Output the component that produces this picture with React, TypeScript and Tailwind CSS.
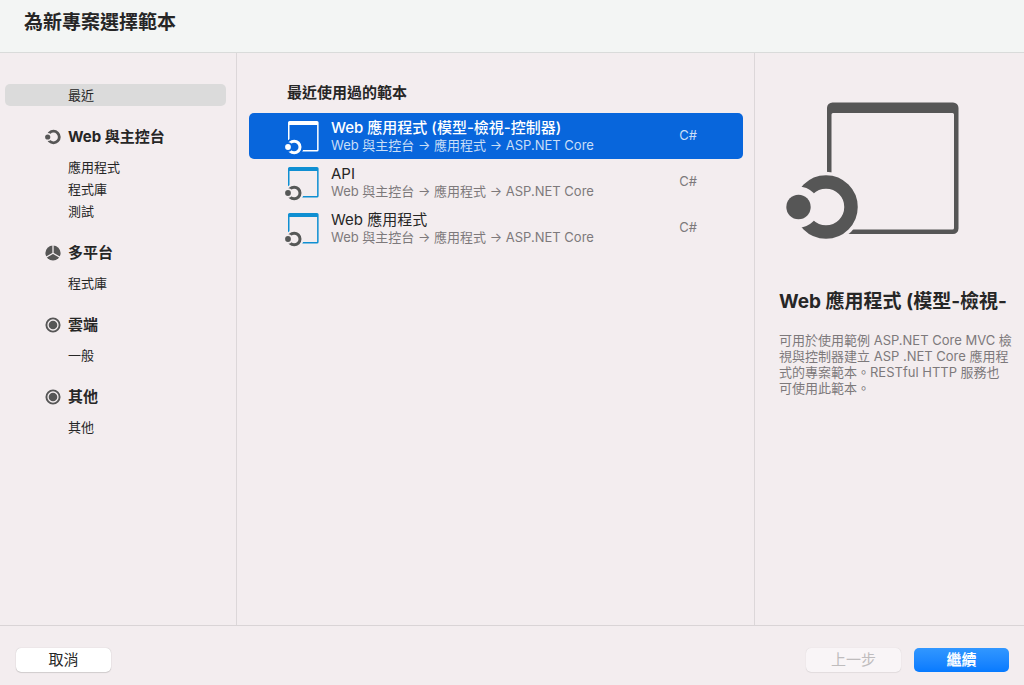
import { useState } from "react";

type IconProps = { className?: string };

function TemplateIcon({ selected, id }: { selected: boolean; id: string }) {
  const frame = selected ? "#ffffff" : "#0f8fd2";
  const ring = selected ? "#ffffff" : "#565857";
  return (
    <svg viewBox="0 0 34 34" className="mb-1 h-[34px] w-[34px] shrink-0 self-end" aria-hidden="true">
      <defs>
        <mask id={`frame-${id}`} maskUnits="userSpaceOnUse" x="0" y="0" width="34" height="34">
          <rect width="34" height="34" fill="#fff" />
          <circle cx="9.2" cy="26" r="9.3" fill="#000" />
        </mask>
        <mask id={`ring-${id}`} maskUnits="userSpaceOnUse" x="0" y="0" width="34" height="34">
          <rect width="34" height="34" fill="#fff" />
          <circle cx="3" cy="26" r="4.8" fill="#000" />
        </mask>
      </defs>
      <g mask={`url(#frame-${id})`} fill={frame}>
        <path
          fillRule="evenodd"
          d="M4.600 0H32a1.600 1.600 0 0 1 1.600 1.600V29a1.600 1.600 0 0 1-1.600 1.600H4.600A1.600 1.600 0 0 1 3 29V1.600A1.600 1.600 0 0 1 4.600 0ZM4.500 4V29.100H32.100V4Z"
        />
      </g>
      <g mask={`url(#ring-${id})`}>
        <circle cx="9.2" cy="26" r="5.8" fill="none" stroke={ring} strokeWidth="3" />
      </g>
      <circle cx="3" cy="26" r="2.9" fill={ring} />
    </svg>
  );
}

function LargeTemplateIcon() {
  return (
    <svg viewBox="0 0 176 142" className="h-[142px] w-[176px]" aria-hidden="true">
      <defs>
        <mask id="frame-large" maskUnits="userSpaceOnUse" x="0" y="0" width="176" height="142">
          <rect width="176" height="142" fill="#fff" />
          <circle cx="42" cy="107" r="35.3" fill="#000" />
        </mask>
        <mask id="ring-large" maskUnits="userSpaceOnUse" x="0" y="0" width="176" height="142">
          <rect width="176" height="142" fill="#fff" />
          <circle cx="14.5" cy="107" r="20.6" fill="#000" />
        </mask>
      </defs>
      <g mask="url(#frame-large)" fill="#565656">
        <path
          fillRule="evenodd"
          d="M48.500 2.500H169a5.500 5.500 0 0 1 5.500 5.500V128.500a5.500 5.500 0 0 1-5.500 5.500H48.500a5.500 5.500 0 0 1-5.500-5.500V8a5.500 5.500 0 0 1 5.500-5.500ZM49 13a1.500 1.500 0 0 0-1.500 1.500V129.500H168.500a1.500 1.500 0 0 0 1.500-1.500V14.500a1.500 1.500 0 0 0-1.500-1.500Z"
        />
      </g>
      <g mask="url(#ring-large)">
        <circle cx="42" cy="107" r="25" fill="none" stroke="#565656" strokeWidth="13.5" />
      </g>
      <circle cx="14.5" cy="107" r="12.2" fill="#565656" />
    </svg>
  );
}

function ConsoleIcon({ className }: IconProps) {
  return (
    <svg viewBox="0 0 16 16" className={className} aria-hidden="true">
      <defs>
        <mask id="console-ring" maskUnits="userSpaceOnUse" x="0" y="0" width="16" height="16">
          <rect width="16" height="16" fill="#fff" />
          <circle cx="2.7" cy="8" r="4" fill="#000" />
        </mask>
      </defs>
      <g mask="url(#console-ring)">
        <circle cx="8.5" cy="8" r="5.8" fill="none" stroke="#565656" strokeWidth="2.8" />
      </g>
      <circle cx="2.7" cy="8" r="2.6" fill="#565656" />
    </svg>
  );
}

function PlatformIcon({ className }: IconProps) {
  return (
    <svg viewBox="0 0 16 16" className={className} aria-hidden="true">
      <circle cx="8" cy="8" r="7.6" fill="#565656" />
      <path d="M8 0V8.300M8 8.300L1 12.300M8 8.300L15 12.300" stroke="#f3edef" strokeWidth="1.3" fill="none" />
    </svg>
  );
}

function TargetIcon({ className }: IconProps) {
  return (
    <svg viewBox="0 0 16 16" className={className} aria-hidden="true">
      <circle cx="8" cy="8" r="6.6" fill="none" stroke="#565656" strokeWidth="1.9" />
      <circle cx="8" cy="8" r="4.3" fill="#565656" />
    </svg>
  );
}

const groups = [
  { name: "Web 與主控台", Icon: ConsoleIcon, items: ["應用程式", "程式庫", "測試"] },
  { name: "多平台", Icon: PlatformIcon, items: ["程式庫"] },
  { name: "雲端", Icon: TargetIcon, items: ["一般"] },
  { name: "其他", Icon: TargetIcon, items: ["其他"] },
];

const templates = [
  { id: "mvc", name: "Web 應用程式 (模型-檢視-控制器)" },
  { id: "api", name: "API" },
  { id: "web", name: "Web 應用程式" },
];

function SidebarItem({ label, active, onClick }: { label: string; active: boolean; onClick: () => void }) {
  return (
    <button
      type="button"
      onClick={onClick}
      className={`block h-[22px] w-full rounded-[5px] pl-[63px] text-left text-[13px] leading-[22px] ${
        active ? "bg-[#dbdbdb]" : ""
      }`}
    >
      {label}
    </button>
  );
}

export default function App() {
  const [category, setCategory] = useState("recent");
  const [template, setTemplate] = useState("mvc");

  return (
    <div className="flex min-h-screen flex-col bg-[#f3edef] font-['Inter','Noto_Sans_CJK_TC',sans-serif] text-[#262626]">
      <header className="h-[53px] border-b border-[#d9dbda] bg-[#f3f5f4] px-6">
        <h1 className="text-[19px] leading-[46px] font-bold">為新專案選擇範本</h1>
      </header>

      <main className="flex flex-1">
        <nav className="w-[237px] shrink-0 border-r border-[#dcd7d9] pt-[31px] pr-[10px] pl-[5px]">
          <SidebarItem label="最近" active={category === "recent"} onClick={() => setCategory("recent")} />
          {groups.map(({ name, Icon, items }) => (
            <section key={name} className="mt-3">
              <h2 className="flex h-[38px] items-center gap-[7px] pl-10 text-[15px] font-bold">
                <Icon className="h-4 w-4" />
                {name}
              </h2>
              {items.map((item) => (
                <SidebarItem
                  key={item}
                  label={item}
                  active={category === `${name}/${item}`}
                  onClick={() => setCategory(`${name}/${item}`)}
                />
              ))}
            </section>
          ))}
        </nav>

        <section className="min-w-0 flex-1 pt-7 pr-[11px] pl-3">
          <h2 className="pl-[38px] text-[15px] leading-6 font-semibold">最近使用過的範本</h2>
          <ul className="mt-2">
            {templates.map(({ id, name }) => {
              const selected = template === id;
              return (
                <li key={id}>
                  <button
                    type="button"
                    onClick={() => setTemplate(id)}
                    className={`flex h-[46px] w-full items-center rounded-[5px] pr-[46px] pl-9 text-left ${
                      selected ? "bg-[#0866dc] text-white" : ""
                    }`}
                  >
                    <TemplateIcon selected={selected} id={id} />
                    <span className="ml-3 flex min-w-0 flex-1 flex-col">
                      <span className={`text-[15px] leading-[18px] ${selected ? "font-medium" : ""}`}>{name}</span>
                      <span
                        className={`text-[13px] leading-4 ${selected ? "text-[#c9def7]" : "text-[#7d797b]"}`}
                      >
                        Web 與主控台 → 應用程式 → ASP.NET Core
                      </span>
                    </span>
                    <span className={`text-[13px] ${selected ? "text-[#c9def7]" : "text-[#7d797b]"}`}>C#</span>
                  </button>
                </li>
              );
            })}
          </ul>
        </section>

        <aside className="w-[270px] shrink-0 border-l border-[#dcd7d9] pt-[47px] pr-2 pl-6">
          <div className="pl-[5px]">
            <LargeTemplateIcon />
          </div>
          <h2 className="mt-[46px] overflow-hidden text-[19px] leading-7 font-bold whitespace-nowrap">
            Web 應用程式 (模型-檢視-
          </h2>
          <p className="mt-4 text-[13px] leading-4 text-[#7d797b]">
            可用於使用範例 ASP.NET Core MVC 檢<br />
            視與控制器建立 ASP .NET Core 應用程<br />
            式的專案範本。RESTful HTTP 服務也<br />
            可使用此範本。
          </p>
        </aside>
      </main>

      <footer className="flex h-[60px] items-center gap-[13px] border-t border-[#d9d4d6] pt-2 pr-[15px] pl-4 text-[15px]">
        <button
          type="button"
          className="mr-auto h-6 w-[95px] rounded-[5px] bg-white leading-6 shadow-[0_0_1px_rgba(0,0,0,0.25),0_1px_1px_rgba(0,0,0,0.12)]"
        >
          取消
        </button>
        <button
          type="button"
          disabled
          className="h-6 w-[95px] rounded-[5px] bg-[#f9f5f7] leading-6 text-[#bfbcbd] shadow-[0_0_1px_rgba(0,0,0,0.15),0_1px_1px_rgba(0,0,0,0.06)]"
        >
          上一步
        </button>
        <button
          type="button"
          className="h-6 w-[95px] rounded-[5px] bg-linear-to-b from-[#3197ff] to-[#067aff] leading-6 font-semibold text-white"
        >
          繼續
        </button>
      </footer>
    </div>
  );
}
